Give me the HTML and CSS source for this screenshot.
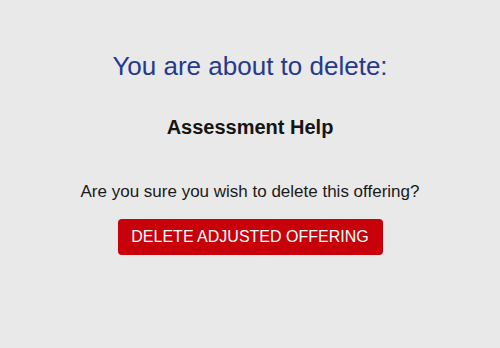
FILE: index.html
```html
<!DOCTYPE html>
<html>
<head>
<meta charset="utf-8">
<link rel="stylesheet" href="styles.css">
</head>
<body>
<main class="dialog">
  <h1 class="title">You are about to delete:</h1>
  <p class="item-name">Assessment Help</p>
  <p class="question">Are you sure you wish to delete this offering?</p>
  <button class="delete-btn" type="button">DELETE ADJUSTED OFFERING</button>
</main>
</body>
</html>
```
FILE: styles.css
```css
html, body {
  margin: 0;
  padding: 0;
  height: 100%;
}
body {
  background: #e9e9e9;
  font-family: "Liberation Sans", Arial, sans-serif;
}
.dialog {
  display: flex;
  flex-direction: column;
  align-items: center;
  padding-top: 50px;
}
.title {
  margin: 0;
  font-size: 26px;
  font-weight: normal;
  color: #26398c;
  line-height: 32px;
}
.item-name {
  margin: 33px 0 0;
  font-size: 20px;
  font-weight: bold;
  color: #151515;
  line-height: 24px;
}
.question {
  margin: 42px 0 0;
  font-size: 17px;
  color: #1a1a1a;
  line-height: 22px;
}
.delete-btn {
  margin-top: 16px;
  width: 265px;
  height: 36px;
  background: #c8000a;
  border: none;
  border-radius: 4px;
  color: #ffffff;
  font-family: "Liberation Sans", Arial, sans-serif;
  font-size: 16px;
  padding: 0;
}
```
